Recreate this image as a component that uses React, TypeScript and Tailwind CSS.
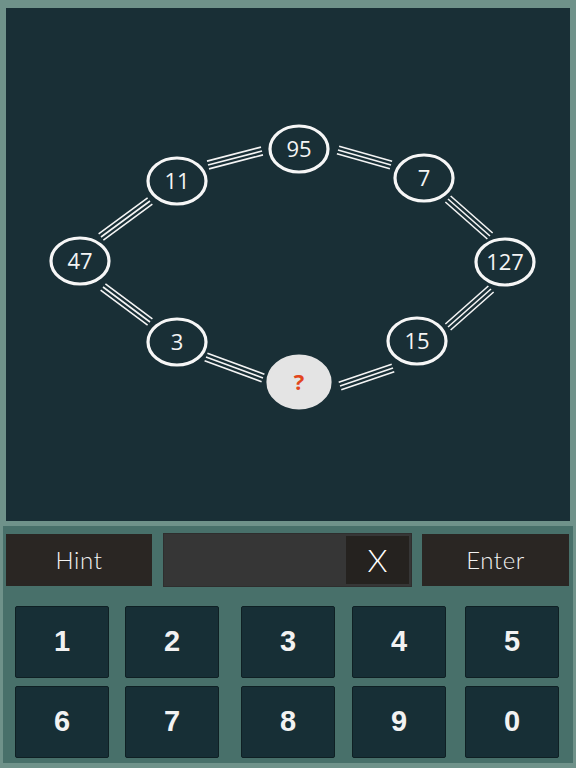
import React from "react";

type Node = { x: number; y: number; label: string; q?: boolean };

const nodes: Node[] = [
  { x: 299, y: 149, label: "95" },
  { x: 177, y: 181, label: "11" },
  { x: 424, y: 178, label: "7" },
  { x: 80, y: 261, label: "47" },
  { x: 505, y: 262, label: "127" },
  { x: 177, y: 342, label: "3" },
  { x: 417, y: 341, label: "15" },
  { x: 299, y: 382, label: "?", q: true },
];

const segs: [number, number, number, number][] = [
  [101, 237, 150, 201],
  [208, 165, 262, 151],
  [338, 150, 391, 165],
  [448, 199, 490, 236],
  [491, 289, 448, 327],
  [103, 287, 150, 322],
  [206, 357, 263, 378],
  [340, 386, 393, 368],
];

function Triple({ s }: { s: [number, number, number, number] }) {
  const [x1, y1, x2, y2] = s;
  const dx = x2 - x1;
  const dy = y2 - y1;
  const len = Math.hypot(dx, dy);
  const nx = -dy / len;
  const ny = dx / len;
  return (
    <g>
      {[-4, 0, 4].map((o) => (
        <line
          key={o}
          x1={x1 + nx * o}
          y1={y1 + ny * o}
          x2={x2 + nx * o}
          y2={y2 + ny * o}
          stroke="#f4f4f4"
          strokeWidth={1.6}
        />
      ))}
    </g>
  );
}

const gapClasses = ["ml-0", "ml-[16px]", "ml-[22px]", "ml-[17px]", "ml-[19px]"];

export default function App() {
  const keys = [
    ["1", "2", "3", "4", "5"],
    ["6", "7", "8", "9", "0"],
  ];
  return (
    <div className="w-[576px] h-[768px] bg-[#6f928a] pt-[8px] flex flex-col overflow-hidden">
      <div className="mx-[6px] w-[564px] h-[513px] bg-[#192f36] shrink-0">
        <svg width="564" height="513" viewBox="6 8 564 513">
          {segs.map((s, i) => (
            <Triple key={i} s={s} />
          ))}
          {nodes.map((n) => (
            <g key={n.label}>
              <ellipse
                cx={n.x}
                cy={n.y}
                rx={n.q ? 31 : 29}
                ry={n.q ? 26 : 23}
                fill={n.q ? "#e4e4e4" : "none"}
                stroke={n.q ? "#e4e4e4" : "#f6f6f6"}
                strokeWidth={3.2}
              />
              <text
                x={n.x}
                y={n.y + 7.5}
                textAnchor="middle"
                fontFamily="'Open Sans', 'Noto Sans', sans-serif"
                fontSize={22}
                fontWeight={n.q ? 700 : 500}
                fill={n.q ? "#e2461c" : "#f4f4f4"}
              >
                {n.label}
              </text>
            </g>
          ))}
        </svg>
      </div>
      <div className="mt-[5px] mx-[3px] h-[237px] bg-[#48706a] shrink-0 flex flex-col">
        <div className="flex items-start pt-[7px] pl-[3px]">
          <div className="w-[146px] h-[52px] mt-[1px] bg-[#2a2623] flex items-center justify-center text-[#f2f2f2] text-[24px] font-light font-['Lato','Open_Sans',sans-serif] tracking-wide">
            Hint
          </div>
          <div className="ml-[11px] w-[249px] h-[54px] bg-[#363636] border border-[#2e2e2e] flex justify-end p-[2px]">
            <div className="w-[63px] h-full bg-[#25221f] flex items-center justify-center text-white text-[32px] font-light font-['Lato','Open_Sans',sans-serif]">
              X
            </div>
          </div>
          <div className="ml-[10px] w-[147px] h-[52px] mt-[1px] bg-[#2a2623] flex items-center justify-center text-[#f2f2f2] text-[24px] font-light font-['Lato','Open_Sans',sans-serif] tracking-wide">
            Enter
          </div>
        </div>
        <div className="flex flex-col gap-[8px] mt-[19px] pl-[12px]">
          {keys.map((row, ri) => (
            <div key={ri} className="flex">
              {row.map((k, ki) => (
                <div
                  key={k}
                  className={`${gapClasses[ki]} w-[94px] h-[72px] bg-[#172f36] border border-[#0f2024] rounded-[2px] flex items-center justify-center text-[#f2f2f2] text-[29px] font-bold font-['Liberation_Sans',Arial,sans-serif]`}
                >
                  {k}
                </div>
              ))}
            </div>
          ))}
        </div>
      </div>
    </div>
  );
}
